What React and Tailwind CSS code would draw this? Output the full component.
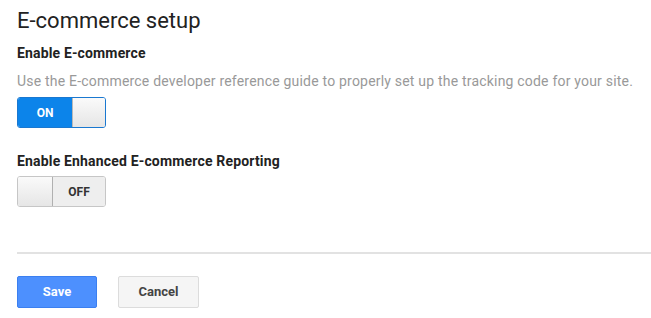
export default function App() {
  return (
    <div className="w-[651px] h-[318px] bg-white overflow-hidden" style={{ fontFamily: "Roboto, 'Liberation Sans', sans-serif" }}>
      <div className="pl-[17px] pt-[7px]">
        <h1 className="text-[22px] leading-[28px] font-normal text-[#222]">E-commerce setup</h1>
        <div className="mt-[8px] text-[14px] leading-[20px] font-bold text-[#222] tracking-[0.15px]">Enable E-commerce</div>
        <div className="mt-[8px] text-[14px] leading-[20px] text-[#999] tracking-[0.2px]">
          Use the E-commerce developer reference guide to properly set up the tracking code for your site.
        </div>
        <div className="mt-[6px] flex w-[89px] h-[31px] rounded-[3px] overflow-hidden border border-[#1a78d0]">
          <div className="w-[54px] bg-[#0c84ea] flex items-center justify-center text-white text-[12px] font-bold">ON</div>
          <div className="flex-1 bg-gradient-to-b from-[#fafafa] to-[#e6e6e6] border-l border-[#b8b8b8]"></div>
        </div>
        <div className="mt-[23px] text-[14px] leading-[20px] font-bold text-[#222] tracking-[0.17px]">Enable Enhanced E-commerce Reporting</div>
        <div className="mt-[5px] flex w-[89px] h-[31px] rounded-[3px] overflow-hidden border border-[#c6c6c6]">
          <div className="w-[35px] bg-gradient-to-b from-[#fafafa] to-[#e6e6e6] border-r border-[#b0b0b0]"></div>
          <div className="flex-1 bg-[#eeeeee] flex items-center justify-center text-[#333] text-[12px] font-bold">OFF</div>
        </div>
        <div className="mt-[45px] h-[2px] bg-[#e2e2e2]"></div>
        <div className="mt-[22px] flex gap-[21px]">
          <button className="w-[80px] h-[32px] rounded-[2px] bg-[#4d90fe] border border-[#3b7ff0] text-white text-[13px] font-bold">Save</button>
          <button className="w-[81px] h-[32px] rounded-[2px] bg-[#f5f5f5] border border-[#dcdcdc] text-[#444] text-[13px] font-bold">Cancel</button>
        </div>
      </div>
    </div>
  );
}
